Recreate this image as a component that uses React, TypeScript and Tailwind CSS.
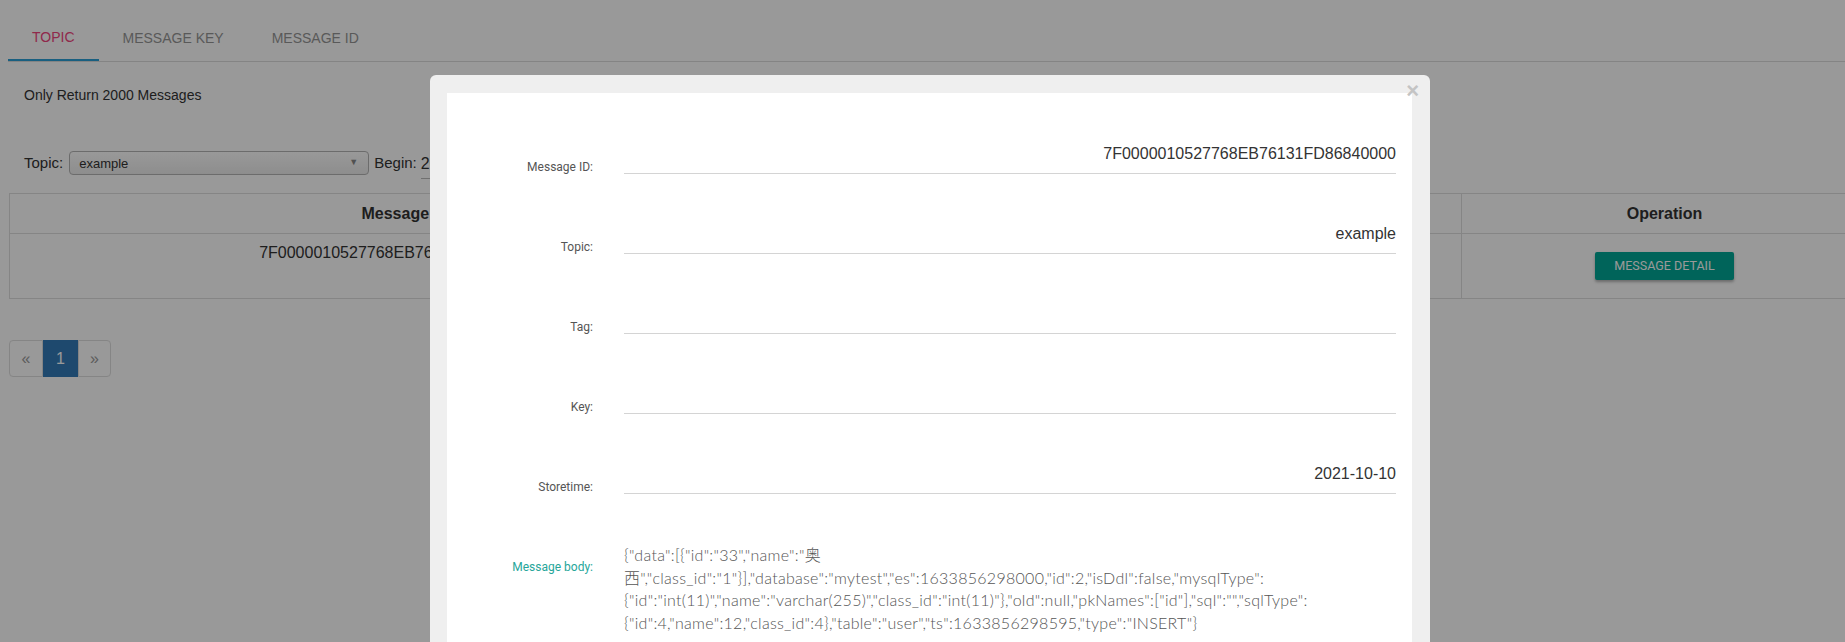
import React from "react";

const rows: { label: string; value: string }[] = [
  { label: "Message ID:", value: "7F0000010527768EB76131FD86840000" },
  { label: "Topic:", value: "example" },
  { label: "Tag:", value: "" },
  { label: "Key:", value: "" },
  { label: "Storetime:", value: "2021-10-10" },
];

const bodyLines = [
  '{"data":[{"id":"33","name":"奥',
  '西","class_id":"1"}],"database":"mytest","es":1633856298000,"id":2,"isDdl":false,"mysqlType":',
  '{"id":"int(11)","name":"varchar(255)","class_id":"int(11)"},"old":null,"pkNames":["id"],"sql":"","sqlType":',
  '{"id":4,"name":12,"class_id":4},"table":"user","ts":1633856298595,"type":"INSERT"}',
];

export default function App() {
  return (
    <div className="relative h-[642px] w-[1845px] overflow-hidden bg-white font-['Liberation_Sans',Arial,sans-serif] text-[#333]">
      {/* Page */}
      <div className="pl-2 pt-[13px]">
        <div className="flex border-b border-[#dcdcdc]">
          <div className="flex h-12 items-center border-b-2 border-[#2a9fd6] px-6 pt-[2px] text-[14px] text-[#f0457d]">
            TOPIC
          </div>
          <div className="flex h-12 items-center px-6 pt-[2px] text-[14px] text-[#959595]">MESSAGE KEY</div>
          <div className="flex h-12 items-center px-6 pt-[2px] text-[14px] text-[#959595]">MESSAGE ID</div>
        </div>
      </div>
      <div className="mt-[23px] pl-6 text-[14px] leading-5 text-[#333]">Only Return 2000 Messages</div>
      <div className="mt-[46px] flex h-6 items-center pl-6 text-[15px]">
        <span className="text-[#333]">Topic:</span>
        <div className="ml-[6px] flex h-6 w-[300px] items-center justify-between rounded-[4px] border border-[#b4b4b4] bg-gradient-to-b from-white to-[#ececec] pl-[9px] pr-[10px] text-[13px]">
          <span className="pt-[2px]">example</span>
          <span className="text-[9px] text-[#888]">▼</span>
        </div>
        <span className="ml-[5px] text-[#333]">Begin:</span>
        <div className="ml-[4px] mt-[4px] w-[220px] border-b border-[#bbb] pb-[2px] text-[16px]">2021-10-10 00:00</div>
      </div>
      <div className="ml-[9px] mt-[18px]">
        <table className="w-[1858px] table-fixed border-collapse text-[16px]">
          <colgroup>
            <col className="w-[792px]" />
            <col className="w-[220px]" />
            <col className="w-[220px]" />
            <col className="w-[220px]" />
            <col className="w-[406px]" />
          </colgroup>
          <thead>
            <tr>
              <th className="h-[40px] border border-[#dedede] p-2 text-center font-bold leading-[22px] text-[#333]">Message ID</th>
              <th className="border border-[#dedede] p-2 text-center font-bold leading-[22px]">Tag</th>
              <th className="border border-[#dedede] p-2 text-center font-bold leading-[22px]">Key</th>
              <th className="border border-[#dedede] p-2 text-center font-bold leading-[22px]">StoreTime</th>
              <th className="border border-[#dedede] p-2 text-center font-bold leading-[22px]">Operation</th>
            </tr>
          </thead>
          <tbody>
            <tr>
              <td className="h-[65px] border border-[#dedede] p-2 align-top text-center leading-[22px]">7F0000010527768EB76131FD86840000</td>
              <td className="border border-[#dedede] p-2 align-top text-center leading-[22px]"></td>
              <td className="border border-[#dedede] p-2 align-top text-center leading-[22px]"></td>
              <td className="border border-[#dedede] p-2 align-top text-center leading-[22px]">2021-10-10 17:04:58</td>
              <td className="border border-[#dedede] p-2 align-top text-center">
                <button className="mt-[10px] h-[28px] w-[139px] rounded-[2px] bg-[#00a796] font-['Roboto',sans-serif] text-[12.5px] text-white shadow-[0_2px_3px_rgba(0,0,0,0.3)]">
                  MESSAGE DETAIL
                </button>
              </td>
            </tr>
          </tbody>
        </table>
      </div>
      <div className="ml-[9px] mt-[41px] flex h-[37px] w-[102px] text-[16px]">
        <div className="flex w-[34px] items-center justify-center rounded-l-[4px] border border-[#dedede] text-[#9a9a9a]">«</div>
        <div className="flex w-[35px] items-center justify-center bg-[#337ab7] text-white">1</div>
        <div className="flex w-[33px] items-center justify-center rounded-r-[4px] border border-[#dedede] text-[#9a9a9a]">»</div>
      </div>

      {/* Backdrop */}
      <div className="absolute inset-0 bg-black/40" />

      {/* Modal */}
      <div className="absolute left-[430px] top-[75px] h-[640px] w-[1000px] rounded-t-[6px] bg-[#efefef] pl-[17px] pr-[18px] pt-[18px]">
        <button className="absolute right-[11px] top-[6px] font-['Liberation_Sans',Arial,sans-serif] text-[22px] font-bold leading-5 text-[#c4c4c4]">
          ×
        </button>
        <div className="h-full bg-white pt-px">
          {rows.map((r) => (
            <div key={r.label} className="flex h-[80px] items-end">
              <div className="w-[146px] text-right font-['Roboto',sans-serif] text-[12px] leading-[14px] text-[#555]">
                {r.label}
              </div>
              <div className="ml-[31px] mr-[16px] h-[36px] flex-1 border-b border-[#d4d4d4] pb-[9px] pt-[6px] text-right text-[16px] leading-5 text-[#333]">
                {r.value}
              </div>
            </div>
          ))}
          <div className="mt-[50px] flex">
            <div className="mt-[16px] w-[146px] text-right font-['Roboto',sans-serif] text-[12px] leading-[14px] text-[#26a69a]">
              Message body:
            </div>
            <div className="ml-[31px] mr-[16px] flex-1 font-['Lato','Noto_Sans_CJK_SC',sans-serif] text-[16px] font-light leading-[22.67px] tracking-[0.28px] text-[#555]">
              {bodyLines.map((l, i) => (
                <div key={i} className="whitespace-nowrap">
                  {l}
                </div>
              ))}
            </div>
          </div>
        </div>
      </div>
    </div>
  );
}
